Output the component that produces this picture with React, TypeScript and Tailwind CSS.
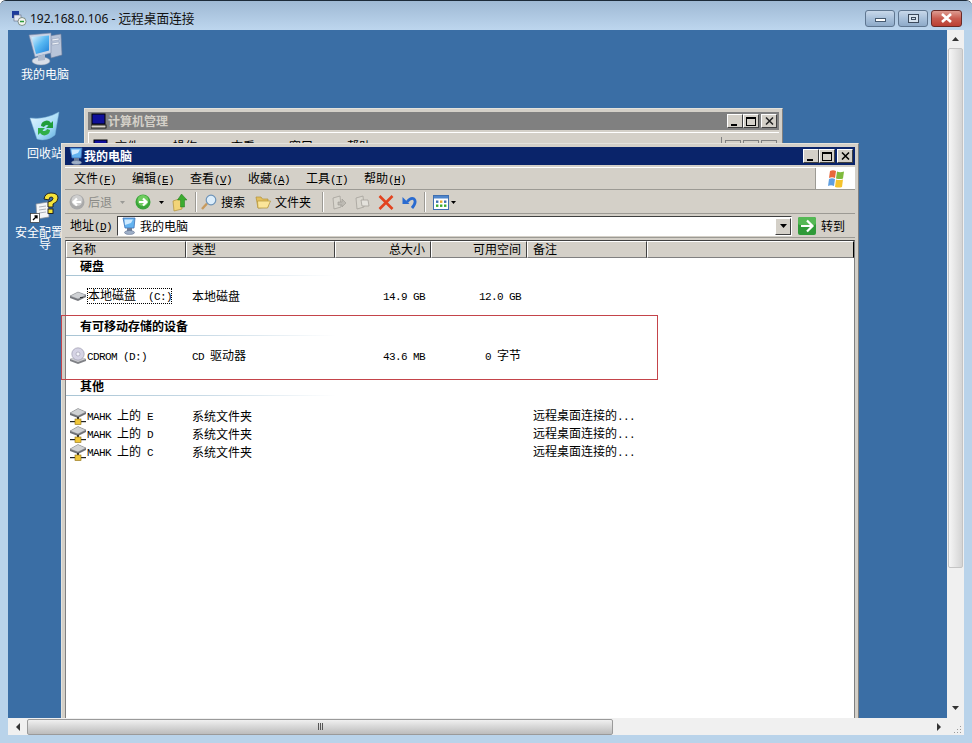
import React from "react";

const L = ({ children }: { children: React.ReactNode }) => (
  <span className="text-[11px] tracking-[-0.6px] font-['Liberation_Mono',monospace]">{children}</span>
);
const Key = ({ k }: { k: string }) => (
  <span className="text-[11px] tracking-[-0.6px] font-['Liberation_Mono',monospace]">
    (<span className="underline">{k}</span>)
  </span>
);

const Monitor = ({ size }: { size: number }) => (
  <svg width={size} height={size} viewBox="0 0 36 36">
    <defs>
      <linearGradient id="scr" x1="0" y1="0" x2="1" y2="1">
        <stop offset="0" stopColor="#dff4ff" />
        <stop offset="0.5" stopColor="#57b8f2" />
        <stop offset="1" stopColor="#1f7fd8" />
      </linearGradient>
    </defs>
    <path d="M22 5 L34 3 L35 24 L24 27 Z" fill="#b8c4d8" stroke="#6a7a98" strokeWidth="0.6" />
    <path d="M25 8 L32 7 L32 9 L25 10 Z M25 12 L32 11 L32 13 L25 14 Z" fill="#eef2f8" stroke="#7686a2" strokeWidth="0.4" />
    <path d="M2 4 L24 2 L24 22 L8 26 Z" fill="#c9d4e6" stroke="#7c8aa8" strokeWidth="0.6" />
    <path d="M4.5 6 L22 4.5 L22 19.5 L9 23 Z" fill="url(#scr)" />
    <ellipse cx="14" cy="30" rx="9" ry="4" fill="#d9dfe9" stroke="#8a96aa" strokeWidth="0.5" />
    <path d="M11 25 L18 23 L18 29 L11 30 Z" fill="#aebace" />
  </svg>
);

const SmallPc = () => (
  <svg width="16" height="18" viewBox="0 0 16 18">
    <path d="M2 1 L14 1 L13 11 L4 11 Z" fill="#63b3f0" stroke="#3f70b5" strokeWidth="0.8" />
    <path d="M3.5 2.5 L12 2.5 L10 6 L4 8 Z" fill="#cfeaff" />
    <path d="M6 11 L11 11 L11 14 L6 14 Z" fill="#6a7c98" />
    <ellipse cx="8.5" cy="15.5" rx="5" ry="2" fill="#9fb0c8" stroke="#5b6b88" strokeWidth="0.5" />
  </svg>
);

const Recycle = () => (
  <svg width="32" height="32" viewBox="0 0 32 32">
    <defs>
      <linearGradient id="bin" x1="0" y1="0" x2="1" y2="1">
        <stop offset="0" stopColor="#e8f7ff" />
        <stop offset="0.6" stopColor="#a7dcf7" />
        <stop offset="1" stopColor="#5ba9dc" />
      </linearGradient>
    </defs>
    <path d="M1 7 Q16 9 30 1 L26 24 Q18 31 8 28 Z" fill="url(#bin)" stroke="#7db6dc" strokeWidth="0.5" />
    <path d="M12 15 A5.5 5.5 0 0 1 22 12 L24 10 L24 17 L17 17 L19.5 14.5 A3 3 0 0 0 15 16 Z" fill="#1f9d3a" />
    <path d="M21 19 A5.5 5.5 0 0 1 11 22 L9 24 L9 17 L16 17 L13.5 19.5 A3 3 0 0 0 18 18 Z" fill="#2fae48" />
  </svg>
);

const Security = () => (
  <svg width="30" height="32" viewBox="0 0 30 32">
    <path d="M6 12 L18 10 L19 25 L7 27 Z" fill="#f4f6f8" stroke="#8a8f98" strokeWidth="0.7" />
    <path d="M9 15 L16 14 M9 18 L16 17 M9 21 L16 20" stroke="#9aa0aa" strokeWidth="0.8" />
    <path d="M14 7 Q15 1 21 1 Q28 1 28 6 Q28 10 23 12 L23 15 L18 15 L18 10 Q23 9 23 6.5 Q23 5 21 5 Q19 5 19 8 Z" fill="#f5e33a" stroke="#15151a" strokeWidth="0.9" />
    <rect x="18" y="17" width="5" height="4.5" fill="#f5e33a" stroke="#15151a" strokeWidth="0.9" />
    <rect x="0.5" y="21.5" width="9" height="9" fill="#fff" stroke="#333" strokeWidth="0.7" />
    <path d="M3 28 L7 24 M4.5 24 L7 24 L7 26.5" stroke="#000" strokeWidth="1.3" fill="none" />
  </svg>
);

const Drive = () => (
  <svg width="18" height="12" viewBox="0 0 18 12">
    <path d="M1 6 L9 2 L17 5 L17 7 L9 11 L1 8 Z" fill="#75777c" />
    <path d="M1 6 L9 2 L17 5 L9 9 Z" fill="#cfd1d4" stroke="#7a7c80" strokeWidth="0.4" />
    <rect x="11" y="7" width="3" height="1" fill="#333" />
  </svg>
);

const CdDrive = () => (
  <svg width="18" height="18" viewBox="0 0 18 18">
    <path d="M1 12 L9 9 L17 12 L17 14 L9 17 L1 14 Z" fill="#7f8186" />
    <path d="M1 12 L9 9 L17 12 L9 15 Z" fill="#cfd0d3" />
    <circle cx="9" cy="7" r="6.2" fill="#d5d3e4" stroke="#9290a4" strokeWidth="0.6" />
    <circle cx="9" cy="7" r="2" fill="#f4f4fa" stroke="#8c8aa0" strokeWidth="0.5" />
  </svg>
);

const NetDrive = () => (
  <svg width="18" height="18" viewBox="0 0 18 18">
    <path d="M1 6 L9 1.5 L17 5 L17 7 L9 11 L1 8 Z" fill="#6f7176" />
    <path d="M1 6 L9 1.5 L17 5 L9 9 Z" fill="#d0d2d4" stroke="#74767a" strokeWidth="0.4" />
    <rect x="8" y="10" width="2" height="3" fill="#333" />
    <rect x="1" y="14" width="16" height="1.2" fill="#222" />
    <rect x="6" y="12" width="6" height="5.5" fill="#f0c638" stroke="#8a6c10" strokeWidth="0.6" />
  </svg>
);

const CircleArrow = ({ on }: { on: boolean }) => (
  <svg width="16" height="16" viewBox="0 0 16 16">
    <circle cx="8" cy="8" r="7.5" fill={on ? "#3aa53a" : "#a9a9a9"} />
    <circle cx="8" cy="6.5" r="5.5" fill={on ? "#6fcc5f" : "#cfcfcf"} />
    {on ? (
      <path d="M4 8 H11 M8 4.5 L11.5 8 L8 11.5" stroke="#fff" strokeWidth="2.2" fill="none" />
    ) : (
      <path d="M12 8 H5 M8 4.5 L4.5 8 L8 11.5" stroke="#fff" strokeWidth="2.2" fill="none" />
    )}
  </svg>
);

const Caret = ({ c = "#000" }: { c?: string }) => (
  <svg width="5" height="3" viewBox="0 0 5 3">
    <path d="M0 0 H5 L2.5 3 Z" fill={c} />
  </svg>
);

const UpFolder = () => (
  <svg width="17" height="19" viewBox="0 0 17 19">
    <path d="M1 8 L10 5 L10 16 L2 18 Z" fill="#f2d478" stroke="#b08f38" strokeWidth="0.7" />
    <path d="M9.5 1 L15 7 L12.5 7 L12.5 14 L8.5 14 L8.5 7 L5.5 7 Z" fill="#3cab30" stroke="#1e7a1a" strokeWidth="0.5" />
  </svg>
);

const Search = () => (
  <svg width="16" height="16" viewBox="0 0 16 16">
    <path d="M1 15 L6 9.5" stroke="#c79a5e" strokeWidth="2.4" />
    <circle cx="10" cy="6" r="4.8" fill="#dcedfa" stroke="#6d93b8" strokeWidth="1.2" />
  </svg>
);

const Folder = () => (
  <svg width="16" height="14" viewBox="0 0 16 14">
    <path d="M1 2 L6 2 L7.5 4 L13 4 L13 12 L3 13 Z" fill="#e3bf5e" stroke="#b39238" strokeWidth="0.7" />
    <path d="M2.5 6 L15.5 6 L12.5 13 L3 13 Z" fill="#fbe59a" stroke="#b39238" strokeWidth="0.7" />
  </svg>
);

const GreyDoc = ({ flip }: { flip?: boolean }) => (
  <svg width="16" height="15" viewBox="0 0 16 15">
    <path d="M2 3 L9 1 L10 12 L3 14 Z" fill="#d9d6ce" stroke="#a4a19a" strokeWidth="0.8" />
    {flip ? (
      <path d="M7 5 H14 L15 11 H8 Z" fill="#e4e2dc" stroke="#a4a19a" strokeWidth="0.8" />
    ) : (
      <path d="M7 7 H11 V4 L15 8 L11 12 V10 H7 Z" fill="#bdbab3" stroke="#9a9790" strokeWidth="0.6" />
    )}
  </svg>
);

const RedX = () => (
  <svg width="16" height="15" viewBox="0 0 16 15">
    <path d="M1.5 1 L14.5 14 M14.5 1 L1.5 14" stroke="#e2431e" strokeWidth="2.6" />
  </svg>
);

const Undo = () => (
  <svg width="16" height="15" viewBox="0 0 16 15">
    <path d="M5 7 Q9 2 12 4 Q15 7 10 13" stroke="#2a6bd0" strokeWidth="2.8" fill="none" />
    <path d="M0.5 2 L7.5 9 L0.5 9 Z" fill="#2a6bd0" />
  </svg>
);

const Views = () => (
  <svg width="16" height="15" viewBox="0 0 16 15">
    <rect x="0.5" y="0.5" width="15" height="14" fill="#fff" stroke="#3f6fb0" />
    <rect x="1" y="1" width="14" height="2.5" fill="#4f86cc" />
    {[3, 7, 11].map((x) =>
      [5.5, 9.5].map((y) => (
        <rect key={x + "-" + y} x={x} y={y} width="2.4" height="2.4" fill={y > 7 ? "#3cab30" : x === 7 ? "#e8a72c" : "#3f6fb0"} />
      ))
    )}
  </svg>
);

const GoArrow = () => (
  <svg width="18" height="18" viewBox="0 0 18 18">
    <rect width="18" height="18" rx="2" fill="#2f9a38" />
    <rect y="0" width="18" height="8" rx="2" fill="#55b855" />
    <path d="M3 9 H14 M9 3.5 L14.5 9 L9 14.5" stroke="#fff" strokeWidth="2.2" fill="none" />
  </svg>
);

const Flag = () => (
  <svg width="20" height="20" viewBox="0 0 20 20">
    <path d="M4 2 Q7 0.5 10 2 L9 9 Q6 7.5 3 9 Z" fill="#e8683a" />
    <path d="M11 2.5 Q14 4 18 2.5 L17 9.5 Q14 10.5 10 9.5 Z" fill="#7fba3c" />
    <path d="M3 10 Q6 8.5 9 10 L8 17 Q5 15.5 2 17 Z" fill="#5f9fe0" />
    <path d="M10 10.5 Q13 11.5 17 10.5 L16 18 Q13 19 9 18 Z" fill="#f5c32c" />
  </svg>
);

const WinBtns = ({ dim }: { dim?: boolean }) => {
  const b =
    "flex h-[14px] w-[16px] items-center justify-center border border-t-white border-l-white border-r-[#404040] border-b-[#404040] bg-[#d4d0c8]";
  return (
    <div className="flex shrink-0 items-center">
      <div className={b}>
        <div className="mt-[7px] mr-[3px] h-[2px] w-[6px] bg-black" />
      </div>
      <div className={b}>
        <div className="h-[9px] w-[10px] border border-t-2 border-black" />
      </div>
      <div className={b + " ml-[2px]"}>
        <svg width="9" height="8" viewBox="0 0 9 8">
          <path d="M1 0.5 L8 7.5 M8 0.5 L1 7.5" stroke={dim ? "#222" : "#000"} strokeWidth="1.5" />
        </svg>
      </div>
    </div>
  );
};

const Sep = () => <div className="mx-[6px] h-[20px] w-[2px] border-l border-r border-l-[#9c9a94] border-r-white" />;

const Menu = ({ a, k }: { a: string; k: string }) => (
  <div className="w-[58px] shrink-0 whitespace-pre">
    {a}
    <Key k={k} />
  </div>
);

const HCell = ({ w, right, children }: { w: string; right?: boolean; children?: React.ReactNode }) => (
  <div
    className={
      w +
      " flex h-full shrink-0 items-center border border-t-white border-l-white border-r-[#404040] border-b-[#808080] bg-[#d4d0c8] px-[5px] pb-[1px] " +
      (right ? "justify-end" : "")
    }
  >
    {children}
  </div>
);

const Row = ({
  icon,
  name,
  type,
  size,
  free,
  note,
  focus,
  h,
}: {
  icon: React.ReactNode;
  name: React.ReactNode;
  type: React.ReactNode;
  size?: React.ReactNode;
  free?: React.ReactNode;
  note?: string;
  focus?: boolean;
  h: string;
}) => (
  <div className={"flex items-center " + h}>
    <div className="flex w-[120px] shrink-0 items-center pl-[3px] whitespace-pre">
      <div className="flex w-[18px] shrink-0 justify-center">{icon}</div>
      <div className={focus ? "flex h-[16px] w-[85px] items-center border border-dotted border-black whitespace-pre" : "flex items-center whitespace-pre"}>
        <span>{name}</span>
      </div>
    </div>
    <div className="w-[149px] shrink-0 pl-[6px] whitespace-pre">{type}</div>
    <div className="w-[96px] shrink-0 pr-[6px] text-right whitespace-pre">{size}</div>
    <div className="w-[96px] shrink-0 pr-[6px] text-right whitespace-pre">{free}</div>
    <div className="w-[120px] shrink-0 pl-[6px] whitespace-pre">
      {note}
      {note && <L>...</L>}
    </div>
  </div>
);

const Group = ({ label }: { label: string }) => (
  <>
    <div className="flex h-[17px] items-center pb-[1px] pl-[14px] font-bold">{label}</div>
    <div className="h-px w-[270px] bg-gradient-to-r from-[#a8c4d4] via-[#c8dae6] to-white" />
  </>
);

const DeskIcon = ({ top, icon, children }: { top: string; icon: React.ReactNode; children: React.ReactNode }) => (
  <div className={"absolute left-[1px] flex w-[72px] flex-col items-center text-center text-[12px] leading-[12px] text-white " + top}>
    {icon}
    {children}
  </div>
);

export default function App() {
  return (
    <div className="flex h-[743px] w-[972px] flex-col overflow-hidden rounded-t-[6px] border-t border-[#1c2a38] bg-[#b9d3ea] font-['Liberation_Sans','Noto_Sans_CJK_SC',sans-serif] text-[12px] leading-[14px] text-black">
      {/* Title bar */}
      <div className="flex h-[29px] shrink-0 items-center bg-gradient-to-b from-[#9fb9d4] to-[#bdd6ee] pt-[5px] pr-[10px] pl-[11px]">
        <svg width="16" height="16" viewBox="0 0 16 16" className="mr-[3px] shrink-0">
          <rect x="1" y="1" width="7" height="7" fill="#1f3c9c" />
          <rect x="3" y="5" width="7" height="6" fill="#e4e8f2" stroke="#5f6a80" strokeWidth="0.6" />
          <circle cx="11" cy="11.5" r="4" fill="#f0f4f0" stroke="#4a5a4a" strokeWidth="0.6" />
          <path d="M9 11.5 H13" stroke="#2d9a3a" strokeWidth="1.4" />
        </svg>
        <div className="text-[12px] text-[#111] font-['Noto_Sans','Noto_Sans_CJK_SC',sans-serif] whitespace-pre">
          192.168.0.106 - <span className="text-[12.7px]">远程桌面连接</span>
        </div>
        <div className="ml-auto flex gap-[3px]">
          <div className="flex h-[17px] w-[30px] items-center justify-center rounded-[3px] border border-[#5f7690] bg-gradient-to-b from-[#c8d8ea] via-[#a8c0da] to-[#8eaac8]">
            <div className="mt-[3px] h-[4px] w-[11px] border border-[#465a70] bg-white" />
          </div>
          <div className="flex h-[17px] w-[30px] items-center justify-center rounded-[3px] border border-[#5f7690] bg-gradient-to-b from-[#c8d8ea] via-[#a8c0da] to-[#8eaac8]">
            <div className="flex h-[9px] w-[11px] items-center justify-center border border-[#3c4a5c] bg-[#d6e2ee]">
              <div className="h-[3px] w-[5px] border border-[#3c4a5c]" />
            </div>
          </div>
          <div className="flex h-[17px] w-[31px] items-center justify-center rounded-[3px] border border-[#6a2a26] bg-gradient-to-b from-[#dd9c92] via-[#c85c50] to-[#bb3f33]">
            <svg width="13" height="10" viewBox="0 0 13 10">
              <path d="M2 1 L11 9 M11 1 L2 9" stroke="#fff" strokeWidth="2.6" />
            </svg>
          </div>
        </div>
      </div>

      {/* Middle */}
      <div className="flex h-[688px] shrink-0 pl-[8px]">
        <div className="relative h-[688px] w-[939px] shrink-0 overflow-hidden bg-[#3a6ea5] font-['Noto_Sans_CJK_SC',sans-serif]">
          <DeskIcon top="top-[1px]" icon={<Monitor size={36} />}>
            <div className="mt-[1px]">我的电脑</div>
          </DeskIcon>
          <DeskIcon top="top-[81px]" icon={<Recycle />}>
            <div className="mt-[4px]">回收站</div>
          </DeskIcon>
          <DeskIcon top="top-[162px]" icon={<Security />}>
            <div className="mt-[2px] w-[60px] break-all">安全配置向导</div>
          </DeskIcon>

          {/* Background window */}
          <div className="absolute top-[78px] left-[76px] flex h-[110px] w-[699px] flex-col border border-t-[#e4e2dc] border-l-[#e4e2dc] border-r-[#808080] border-b-[#808080] bg-[#d4d0c8] p-[3px]">
            <div className="flex h-[18px] shrink-0 items-center bg-[#808080] pr-[2px] pl-[3px] font-bold text-[#d4d0c8]">
              <svg width="16" height="16" viewBox="0 0 16 16" className="mr-[1px]">
                <rect x="1" y="1" width="13" height="10" fill="#10109a" stroke="#000" />
                <rect x="0" y="12" width="15" height="3" fill="#d4d0c8" stroke="#000" strokeWidth="0.8" />
              </svg>
              计算机管理
              <div className="ml-auto">
                <WinBtns dim />
              </div>
            </div>
            <div className="mt-[2px] flex h-[24px] items-center border-t border-l border-white pt-[4px] pl-[4px]">
              <svg width="16" height="16" viewBox="0 0 16 16" className="mr-[6px]">
                <rect x="1" y="1" width="13" height="10" fill="#10109a" stroke="#000" />
              </svg>
              <Menu a="文件" k="F" />
              <Menu a="操作" k="A" />
              <Menu a="查看" k="V" />
              <Menu a="窗口" k="W" />
              <Menu a="帮助" k="H" />
              <div className="ml-auto flex h-[20px] items-center gap-[2px] border-l border-[#808080] pr-[2px] pl-[3px]">
                <div className="h-[14px] w-[16px] border border-[#808080]" />
                <div className="h-[14px] w-[16px] border border-[#808080]" />
                <div className="h-[14px] w-[16px] border border-[#808080]" />
              </div>
            </div>
          </div>

          {/* Main window */}
          <div className="absolute top-[113px] left-[53px] flex h-[600px] w-[798px] flex-col border border-t-[#e4e2dc] border-l-[#e4e2dc] border-r-[#808080] border-b-[#808080] bg-[#d4d0c8] p-[3px] pb-0">
            <div className="flex h-[18px] shrink-0 items-center bg-[#0a246a] pr-[2px] pl-[3px] font-bold text-white">
              <SmallPc />
              <span>我的电脑</span>
              <div className="ml-auto">
                <WinBtns />
              </div>
            </div>

            {/* Menu bar */}
            <div className="mt-[2px] flex h-[23px] shrink-0 items-center border-t border-b border-t-white border-b-[#9c9a94]">
              <div className="flex flex-1 items-center pt-[1px] pl-[9px]">
                <Menu a="文件" k="F" />
                <Menu a="编辑" k="E" />
                <Menu a="查看" k="V" />
                <Menu a="收藏" k="A" />
                <Menu a="工具" k="T" />
                <Menu a="帮助" k="H" />
              </div>
              <div className="flex h-full w-[40px] items-center justify-center border-l border-[#9c9a94] bg-white">
                <Flag />
              </div>
            </div>

            {/* Toolbar */}
            <div className="flex h-[24px] shrink-0 items-center border-b border-[#9c9a94] pt-[1px] pl-[4px]">
              <CircleArrow on={false} />
              <span className="ml-[3px] text-[#8a8a86]">后退</span>
              <span className="mr-[10px] ml-[8px]">
                <Caret c="#9a9a96" />
              </span>
              <CircleArrow on />
              <span className="mr-[8px] ml-[8px]">
                <Caret />
              </span>
              <UpFolder />
              <Sep />
              <span className="-ml-[2px]">
                <Search />
              </span>
              <span className="ml-[4px]">搜索</span>
              <span className="mr-[3px] ml-[10px]">
                <Folder />
              </span>
              <span className="ml-[1px]">文件夹</span>
              <span className="ml-[5px]">
                <Sep />
              </span>
              <span className="mr-[7px] ml-[1px]">
                <GreyDoc />
              </span>
              <span className="mr-[8px]">
                <GreyDoc flip />
              </span>
              <span className="mr-[8px]">
                <RedX />
              </span>
              <Undo />
              <Sep />
              <span className="ml-[1px]">
                <Views />
              </span>
              <span className="ml-[2px]">
                <Caret />
              </span>
            </div>

            {/* Address bar */}
            <div className="flex h-[24px] shrink-0 items-center border-b border-[#9c9a94] pt-[1px] pl-[5px]">
              <div className="w-[47px] shrink-0 whitespace-pre">
                地址
                <Key k="D" />
              </div>
              <div className="flex h-[20px] w-[675px] shrink-0 items-center border border-t-[#404040] border-l-[#404040] border-r-white border-b-white bg-white pl-[3px]">
                <SmallPc />
                <span className="ml-[3px]">我的电脑</span>
                <div className="ml-auto flex h-[17px] w-[16px] items-center justify-center border border-t-white border-l-white border-r-[#404040] border-b-[#404040] bg-[#d4d0c8]">
                  <svg width="7" height="4" viewBox="0 0 7 4">
                    <path d="M0 0 H7 L3.5 4 Z" fill="#000" />
                  </svg>
                </div>
              </div>
              <span className="ml-[6px]">
                <GoArrow />
              </span>
              <span className="ml-[5px]">转到</span>
            </div>

            {/* List */}
            <div className="mt-[2px] flex min-h-0 flex-1 flex-col border-t border-l border-r border-t-[#404040] border-l-[#808080] border-r-[#808080] bg-white">
              <div className="flex h-[17px] shrink-0">
                <HCell w="w-[120px]">名称</HCell>
                <HCell w="w-[149px]">类型</HCell>
                <HCell w="w-[96px]" right>总大小</HCell>
                <HCell w="w-[96px]" right>可用空间</HCell>
                <HCell w="w-[120px]">备注</HCell>
                <div className="h-full flex-1 border border-t-white border-l-white border-b-[#808080] bg-[#d4d0c8]" />
              </div>
              <Group label="硬盘" />
              <div className="mt-[12px] h-[30px]">
                <Row
                  h="h-[16px]"
                  focus
                  icon={<Drive />}
                  name={<>本地磁盘<L>{"  (C:)"}</L></>}
                  type="本地磁盘"
                  size={<L>14.9 GB</L>}
                  free={<L>12.0 GB</L>}
                />
              </div>
              <Group label="有可移动存储的设备" />
              <div className="mt-[12px] h-[30px]">
                <Row
                  h="h-[16px]"
                  icon={<CdDrive />}
                  name={<L>CDROM (D:)</L>}
                  type={<><L>{"CD "}</L>驱动器</>}
                  size={<L>43.6 MB</L>}
                  free={<><L>{"0 "}</L>字节</>}
                />
              </div>
              <Group label="其他" />
              <div className="mt-[11px]">
                {(["E", "D", "C"] as const).map((d) => (
                  <Row
                    key={d}
                    h="h-[18px]"
                    icon={<NetDrive />}
                    name={<><L>{"MAHK "}</L>上的<L>{" " + d}</L></>}
                    type="系统文件夹"
                    note="远程桌面连接的"
                  />
                ))}
              </div>
            </div>
          </div>

          {/* Red annotation rectangle */}
          <div className="absolute top-[285px] left-[53px] h-[65px] w-[597px] border border-[#c4444a]" />
        </div>

        {/* Vertical scrollbar */}
        <div className="flex h-[688px] w-[17px] shrink-0 flex-col items-center bg-[#f0f0f0]">
          <div className="flex h-[18px] items-center justify-center">
            <svg width="7" height="4" viewBox="0 0 7 4">
              <path d="M3.5 0 L7 4 H0 Z" fill="#333" />
            </svg>
          </div>
          <div className="h-[520px] w-[15px] rounded-[2px] border border-[#c4c4c4] bg-gradient-to-r from-[#f6f6f6] to-[#d4d4d4]" />
          <div className="mt-auto flex h-[18px] items-center justify-center pb-[2px]">
            <svg width="7" height="4" viewBox="0 0 7 4">
              <path d="M0 0 H7 L3.5 4 Z" fill="#333" />
            </svg>
          </div>
        </div>
      </div>

      {/* Horizontal scrollbar */}
      <div className="ml-[8px] flex h-[17px] w-[956px] shrink-0 items-center bg-[#f0f0f0]">
        <div className="flex w-[19px] shrink-0 justify-center">
          <svg width="4" height="8" viewBox="0 0 4 8">
            <path d="M4 0 V8 L0 4 Z" fill="#333" />
          </svg>
        </div>
        <div className="flex h-[16px] w-[586px] shrink-0 items-center justify-center gap-[1px] rounded-[2px] border border-[#9a9a9a] bg-gradient-to-b from-[#f0f0f0] to-[#bcbcbc]">
          <div className="h-[7px] w-px bg-[#555]" />
          <div className="h-[7px] w-px bg-[#555]" />
          <div className="h-[7px] w-px bg-[#555]" />
        </div>
        <div className="ml-auto flex w-[17px] shrink-0 justify-center">
          <svg width="4" height="8" viewBox="0 0 4 8">
            <path d="M0 0 V8 L4 4 Z" fill="#333" />
          </svg>
        </div>
        <div className="flex h-full w-[17px] shrink-0 items-end justify-end pr-[3px] pb-[2px]">
          <svg width="7" height="7" viewBox="0 0 7 7">
            <path d="M6 0 h1 v1 h-1 Z M3 3 h1 v1 h-1 Z M6 3 h1 v1 h-1 Z M0 6 h1 v1 h-1 Z M3 6 h1 v1 h-1 Z M6 6 h1 v1 h-1 Z" fill="#999" />
          </svg>
        </div>
      </div>
      <div className="min-h-0 flex-1" />
    </div>
  );
}
